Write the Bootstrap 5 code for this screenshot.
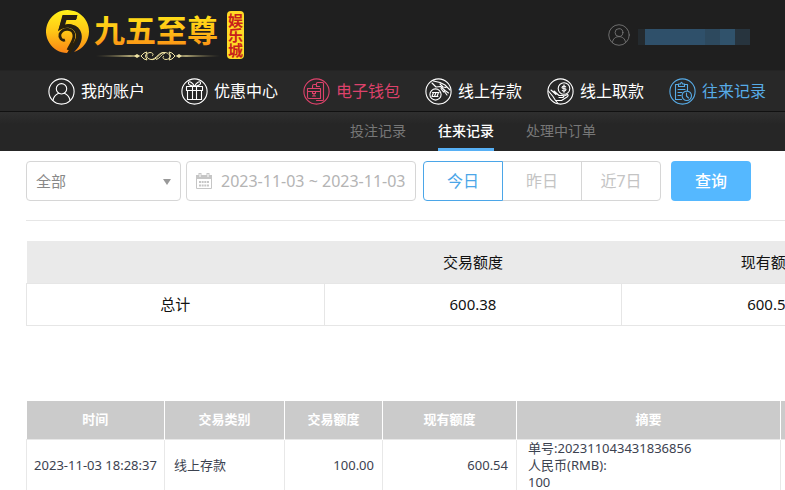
<!DOCTYPE html>
<html lang="zh-CN">
<head>
<meta charset="utf-8">
<meta name="viewport" content="width=device-width, initial-scale=1">
<title>往来记录</title>
<link href="https://cdn.jsdelivr.net/npm/bootstrap@5.3.0/dist/css/bootstrap.min.css" rel="stylesheet">
<style>
body{font-family:"Noto Sans","Noto Sans CJK SC",sans-serif;background:#fff;color:#111;overflow-x:hidden}
.ico{fill:none;stroke:currentColor;stroke-width:1.1;stroke-linecap:round;stroke-linejoin:round;flex:none}
.site-head{background:#1f1f1f;height:70px;padding:0 35px 0 44px}
.user-ico{color:#777}
.user-mask{width:112px;height:16px;background:linear-gradient(90deg,#242a2e 0 7px,#2f506a 7px 67px,#2d495e 67px 82px,#30526b 82px 97px,#27343e 97px)}
.main-nav{background:#282828;height:41px;padding-left:48px;gap:25px;border-top:1px solid #242424}
.main-nav a{color:#fff;font-size:16px;gap:6px;line-height:24px}
.main-nav .account{margin-right:11px}
.main-nav .wallet{color:#dd426b}
.main-nav .current{color:#57abe6}
.sub-nav{height:40px;padding-left:350px;gap:32px;border-top:1px solid #111;background:linear-gradient(#2f2f2f,#262626 12px)}
.sub-nav a{color:#777;font-size:14px;border-bottom:3px solid transparent}
.sub-nav .current{color:#fff;font-weight:500;border-color:#57b0f5}
.page-body{padding:10px 0 0 26px}
.filters{height:60px;border-bottom:1px solid #e6e6e6}
.field{height:40px;border:1px solid #d6d6d6;border-radius:4px;background:#fff}
.kind{width:155px;margin-right:5px}
.kind select{appearance:none;border:0;background:transparent;color:#888;font-size:15px;padding:0 9px;outline:0}
.kind .arrow{position:absolute;right:9px;top:17px;border:4px solid transparent;border-top:6px solid #999;border-bottom:0;pointer-events:none}
.dates{width:230px;padding:0 6px 0 8px;margin-right:7px;color:#c6c6c6}
.dates input{border:0;padding:0;min-width:0;color:#b4b4b4;font-size:16px;outline:0;background:transparent}
.days .btn{width:80px;height:40px;font-size:16px;color:#c4c4c4;border:1px solid #d6d6d6;padding:0;border-radius:4px}
.days .btn.active{color:#4ba6e8;background:#fff;border-color:#4ba6e8}
.query{width:80px;height:40px;background:#55b8ff;color:#fff;border:0;border-radius:4px;font-size:16px;padding:0;font-weight:500;margin-left:10px}
.totals{table-layout:fixed;width:894px;margin:20px 0 75px;font-size:15px;text-align:center}
.totals th{background:#eaeaea;height:42px;font-weight:400}
.totals td{height:42px;border:1px solid #e6e6e6}
.records{table-layout:fixed;width:894px;font-size:13px;line-height:17px;color:#3c4250}
.records th{background:#cbcbcb;color:#fff;height:39px;text-align:center;border-right:1px solid #fff}
.records td{border:1px solid #e8e8e8;padding:0 8px 0 9px}
.records .stamp{padding:0;text-align:center}
.records .memo{padding-left:11px}
</style>
</head>
<body>
<header class="site-head d-flex align-items-center justify-content-between">
  <a href="#" aria-label="九五至尊娱乐城" class="d-block">
    <svg class="d-block" width="204" height="60" viewBox="44 3 204 60">
      <defs>
        <linearGradient id="gold" x1="0" y1="0" x2="0" y2="1"><stop offset="0" stop-color="#fff21a"/><stop offset=".5" stop-color="#ffc616"/><stop offset="1" stop-color="#f98415"/></linearGradient>
        <linearGradient id="rule"><stop offset="0" stop-color="#d9c77c" stop-opacity="0"/><stop offset=".4" stop-color="#efe3a3"/><stop offset=".6" stop-color="#efe3a3"/><stop offset="1" stop-color="#d9c77c" stop-opacity="0"/></linearGradient>
      </defs>
      <path d="M67 51A21.500 21.500 0 1 1 74 50C81 44 84 35 80 28C77 23 71 21 65 23L66.500 18H76L77.500 13H62.500L58.500 28C67 23.500 75 26 76 33C76.500 39 72 44 67 51Z" fill="url(#gold)"/>
      <path d="M68 48C70 43 74 39 74 34C74 26 63 25 60 32C59 36 62 39 65 38M76.500 15.500H64L60.500 26C69 20.500 79 25 78 33C77.500 40 72 44 69 51" fill="none" stroke="#29200d" stroke-width="2.800"/>
      <text x="94" y="40" font-family="Noto Sans CJK SC, sans-serif" font-weight="700" font-size="31" fill="url(#gold)">九五至尊</text>
      <path d="M96 53.500L130 53L142 54L130 55L96 54.500ZM220 53.500L186 53L174 54L186 55L220 54.500Z" fill="url(#rule)"/>
      <path d="M134 54l3-2 3 2-3 2zM176 54l3-2 3 2-3 2z" fill="#efe3a3"/>
      <path d="M141 54Q144 50 147 50Q144 54 147 58Q144 58 141 54M175 54Q172 50 169 50Q172 54 169 58Q172 58 175 54M165 51C160 48 156 58 151 57.500C146 57 145 51 150 50.500C153 50.500 154 53 152 54M151 57.500C157 59 159 50 165 50.500C171 51 171 57.500 166 57.500C163 57.500 162 55 164 54M156 57.500C160 57 161 52 165 51" fill="none" stroke="#efe3a3" stroke-width="1"/>
      <rect x="227" y="9" width="17" height="48" rx="4" fill="#ffda26"/>
      <text x="235.500" y="10.500" writing-mode="vertical-rl" font-family="Noto Sans CJK SC, sans-serif" font-weight="700" font-size="15" fill="#c8211b">娱乐城</text>
    </svg>
  </a>
  <div class="d-flex align-items-center gap-2">
    <svg class="ico user-ico" width="22" height="22" viewBox="0 0 27 27"><circle cx="13.500" cy="13.500" r="12.600"/><circle cx="13.500" cy="10.500" r="4.800"/><path d="M5.500 22.500C6 13 21 13 21.500 22.500"/></svg>
    <div class="user-mask mt-1"></div>
  </div>
</header>
<nav class="main-nav d-flex align-items-center text-nowrap" aria-label="主导航">
  <a href="#" class="account d-flex align-items-center text-decoration-none"><svg class="ico" width="27" height="27" viewBox="0 0 27 27"><circle cx="13.500" cy="13.500" r="12.600"/><circle cx="13.500" cy="10.800" r="5.200"/><path d="M5 22.500C5.500 18.500 8 16.500 10.500 15.300M22 22.500C21.500 18.500 19 16.500 16.500 15.300"/></svg><span>我的账户</span></a>
  <a href="#" class="d-flex align-items-center text-decoration-none"><svg class="ico" width="27" height="27" viewBox="0 0 27 27"><circle cx="13.500" cy="13.500" r="12.600"/><path d="M5.500 8.500h16v4h-16zM6.500 12.500h14v9h-14zM11.500 8.500v13M15.500 8.500v13M13.500 8.500C10 8 6.500 6.500 7.500 4.500S12 5 13.500 8.500C15 5 18.500 2.500 19.500 4.500S17 8 13.500 8.500"/></svg><span>优惠中心</span></a>
  <a href="#" class="wallet d-flex align-items-center text-decoration-none"><svg class="ico" width="27" height="27" viewBox="0 0 27 27"><circle cx="13.500" cy="13.500" r="12.600"/><path d="M9.500 10.500V8q0-1.500 1.500-1.500h2.500V5.500q0-1 1-1H19.500q1 0 1 1V21.500q0 1-1 1H13.500M4.500 10.500H17.500V20.500H6q-1.500 0-1.500-1.500zM13.500 6.500V8.500H16.500M4.500 13.500h13M9.500 13.500v2h3v-2M11 15.500v2.500M9.500 18h3"/></svg><span>电子钱包</span></a>
  <a href="#" class="d-flex align-items-center text-decoration-none"><svg class="ico" width="27" height="27" viewBox="0 0 27 27"><circle cx="13.500" cy="13.500" r="12.600"/><circle cx="10.500" cy="16.500" r="5.600"/><path d="M7 18.500l1.500-4M9.500 18.500l1.500-4M12 18.500l1.500-4M7.500 14.500h6.500M7 18.500h6M8.500 3L15 4.500L20 7L25 12M7 5L11 9L15.500 8.500L20 12.500L23.500 15M15 6L18 9L21 9.500M16 10.500L18.500 14M19 13L22 17"/></svg><span>线上存款</span></a>
  <a href="#" class="d-flex align-items-center text-decoration-none"><svg class="ico" width="27" height="27" viewBox="0 0 27 27"><circle cx="13.500" cy="13.500" r="12.600"/><circle cx="17" cy="10.500" r="5.800"/><path d="M18.700 8.800Q17 7.300 15.500 8.700T17 10.500T18.500 12.300Q17 13.700 15.300 12.300M17 6.800v7.400M1.500 13L6 18.500M4 12L9 16.500M7 13L12 17.500H16Q17.500 19 15.500 19.500H12M17 18L20.500 16.500Q22 17.500 20 19L14.500 22.500H8.500L11 25.500M6 18.500L8.500 22.500"/></svg><span>线上取款</span></a>
  <a href="#" class="current d-flex align-items-center text-decoration-none" aria-current="page"><svg class="ico" width="27" height="27" viewBox="0 0 27 27"><circle cx="13.500" cy="13.500" r="12.600"/><path d="M12.500 21.500H6.500V6.500H9.500M15.500 6.500H18.500V12.500M9.500 8.500V6H11.500Q12.500 2.500 13.500 6H15.500V8.500zM9 11.500h7M9 14.500h4M9 17.500h3"/><circle cx="17.800" cy="17.800" r="4.700"/><path d="M17.500 15V18L19.500 20"/></svg><span>往来记录</span></a>
</nav>
<nav class="sub-nav d-flex text-nowrap" aria-label="记录类别">
  <a href="#" class="d-flex align-items-center text-decoration-none">投注记录</a>
  <a href="#" class="current d-flex align-items-center text-decoration-none" aria-current="page">往来记录</a>
  <a href="#" class="d-flex align-items-center text-decoration-none">处理中订单</a>
</nav>
<main class="page-body">
  <form class="filters d-flex align-items-start text-nowrap">
    <div class="field kind position-relative flex-shrink-0"><select class="w-100 h-100" aria-label="交易类别"><option>全部</option></select><span class="arrow"></span></div>
    <label class="field dates d-flex align-items-center gap-2 flex-shrink-0">
      <svg width="18" height="18" viewBox="0 0 18 18" fill="none" stroke="currentColor" class="flex-shrink-0"><path d="M1.500 3.500h15v13h-15z"/><path d="M1 5h16" stroke-width="4"/><path d="M5 1v4M13 1v4" stroke-width="3"/><path d="M5 2v3M13 2v3" stroke="#fff"/><path d="M4 10h10M4 13.500h10" stroke-width="2" stroke-dasharray="2 .65"/></svg>
      <input class="flex-grow-1" type="text" aria-label="日期范围" value="2023-11-03 ~ 2023-11-03">
    </label>
    <div class="btn-group days flex-shrink-0" role="group" aria-label="快捷日期">
      <button type="button" class="btn active">今日</button><button type="button" class="btn">昨日</button><button type="button" class="btn">近7日</button>
    </div>
    <button type="button" class="btn query flex-shrink-0">查询</button>
  </form>
  <table class="totals">
    <thead><tr><th></th><th scope="col">交易额度</th><th scope="col">现有额度</th></tr></thead>
    <tbody><tr><td>总计</td><td>600.38</td><td>600.54</td></tr></tbody>
  </table>
  <table class="records">
    <colgroup><col style="width:138px"><col style="width:120px"><col style="width:98px"><col style="width:134px"><col style="width:264px"><col></colgroup>
    <thead><tr><th scope="col">时间</th><th scope="col">交易类别</th><th scope="col">交易额度</th><th scope="col">现有额度</th><th scope="col">摘要</th><th></th></tr></thead>
    <tbody><tr><td class="stamp">2023-11-03 18:28:37</td><td>线上存款</td><td class="text-end">100.00</td><td class="text-end">600.54</td><td class="memo">单号:202311043431836856<br>人民币(RMB):<br>100</td><td></td></tr></tbody>
  </table>
</main>
<script src="https://cdn.jsdelivr.net/npm/bootstrap@5.3.0/dist/js/bootstrap.bundle.min.js"></script>
</body>
</html>
